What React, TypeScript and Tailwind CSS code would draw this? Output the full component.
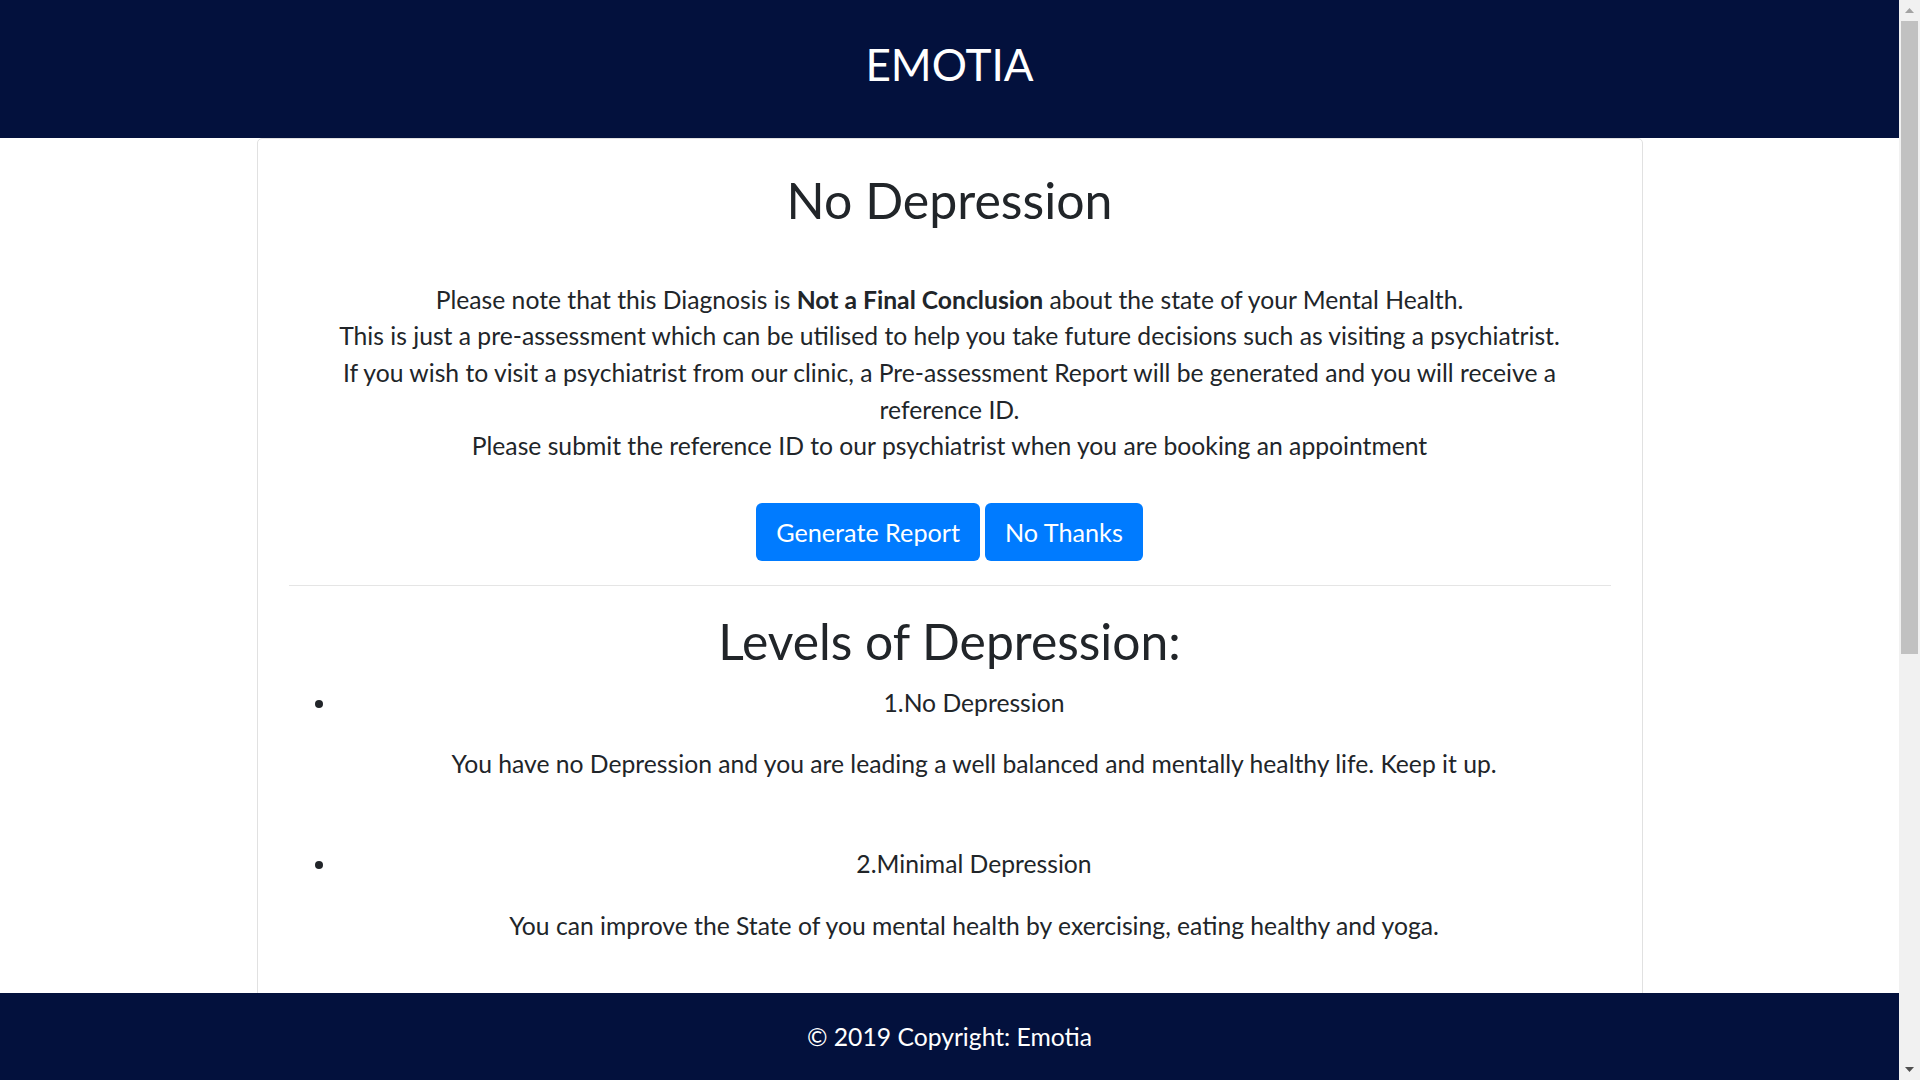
import React from "react";

const levels = [
  {
    title: "1.No Depression",
    text: "You have no Depression and you are leading a well balanced and mentally healthy life. Keep it up.",
  },
  {
    title: "2.Minimal Depression",
    text: "You can improve the State of you mental health by exercising, eating healthy and yoga.",
  },
  {
    title: "3.Mild Depression",
    text: "You might want to talk to someone you trust and keep track of how you feel over the next few weeks.",
  },
  {
    title: "4.Moderate Depression",
    text: "It is advisable to consult a psychiatrist to discuss the state of your mental health.",
  },
  {
    title: "5.Severe Depression",
    text: "Please visit a psychiatrist as soon as possible to receive proper care and support.",
  },
];

function FakeScrollbar() {
  return (
    <div className="fixed top-0 right-0 h-screen w-[21px] bg-[#f1f1f1] flex flex-col items-center">
      <div className="h-[21px] w-full flex items-center justify-center">
        <svg width="9" height="5" viewBox="0 0 9 5">
          <path d="M0 5 L4.5 0 L9 5 Z" fill="#a3a3a3" />
        </svg>
      </div>
      <div className="w-[17px] h-[633px] bg-[#c1c1c1]" />
      <div className="flex-1" />
      <div className="h-[21px] w-full flex items-center justify-center">
        <svg width="9" height="5" viewBox="0 0 9 5">
          <path d="M0 0 L9 0 L4.5 5 Z" fill="#505050" />
        </svg>
      </div>
    </div>
  );
}

export default function App() {
  return (
    <div className="min-h-screen bg-white font-['Lato','Noto_Sans',sans-serif] text-[#212529]">
      <div className="w-[1899px]">
        <header className="h-[138px] bg-[#03113d] flex items-center justify-center pb-[10px]">
          <h1 className="text-[44px] leading-none text-white font-normal">EMOTIA</h1>
        </header>

        <main className="w-[1386px] mx-auto border border-[#e1e1e1] rounded-[5px] px-[31px] pt-[33px] pb-[200px] text-center">
          <h2 className="text-[50px] leading-[57.6px] font-normal">No Depression</h2>

          <div className="mt-[52px] text-[24.7px] leading-[36.7px]">
            <div>
              Please note that this Diagnosis is <b className="font-bold">Not a Final Conclusion</b> about the state of
              your Mental Health.
            </div>
            <div>
              This is just a pre-assessment which can be utilised to help you take future decisions such as visiting a
              psychiatrist.
            </div>
            <div>
              If you wish to visit a psychiatrist from our clinic, a Pre-assessment Report will be generated and you
              will receive a
              <br />
              reference ID.
            </div>
            <div>Please submit the reference ID to our psychiatrist when you are booking an appointment</div>
          </div>

          <div className="mt-[38px] flex justify-center gap-[5px]">
            <button className="h-[58px] px-[20px] rounded-[6px] bg-[#007bff] text-white text-[25.2px] leading-none">
              Generate Report
            </button>
            <button className="h-[58px] px-[20px] rounded-[6px] bg-[#007bff] text-white text-[25.2px] leading-none">
              No Thanks
            </button>
          </div>

          <div className="mt-[24px] h-px bg-[#e5e5e5]" />

          <h2 className="mt-[27px] text-[49.8px] leading-[57.6px] font-normal">Levels of Depression:</h2>

          <ul className="mt-[14px] list-disc pl-[49px] text-[24.7px] leading-[36.7px]">
            {levels.map((l) => (
              <li key={l.title} className="mb-[63px]">
                <div>{l.title}</div>
                <p className="mt-[25px]">{l.text}</p>
              </li>
            ))}
          </ul>
        </main>

        <footer className="fixed bottom-0 left-0 w-[1899px] h-[87px] bg-[#03113d] flex items-center justify-center">
          <p className="text-[24.7px] text-white">© 2019 Copyright: Emotia</p>
        </footer>
      </div>
      <FakeScrollbar />
    </div>
  );
}
